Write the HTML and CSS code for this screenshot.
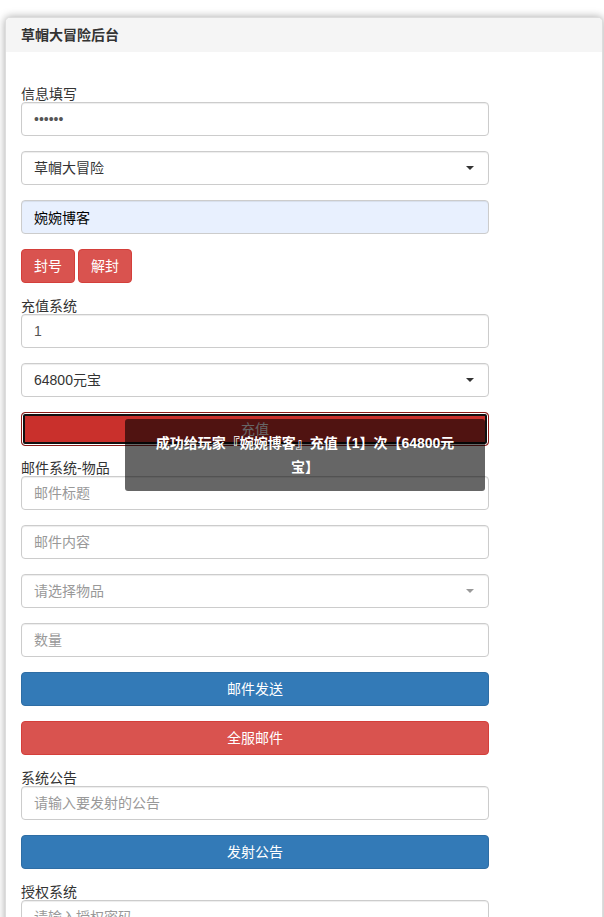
FILE: index.html
```html
<!DOCTYPE html>
<html lang="zh-CN">
<head>
    <meta charset="UTF-8">
    <meta name="viewport" content="width=device-width, initial-scale=1.0">
    <title>草帽大冒险后台</title>
    <link rel="stylesheet" href="styles.css">
</head>
<body>
    <div class="panel">
        <div class="panel-heading">草帽大冒险后台</div>
        <div class="panel-body">
            <form class="admin-form">
                <label class="field-label">信息填写</label>
                <div class="form-group">
                    <input type="password" class="form-control" value="123456">
                </div>
                <div class="form-group select-wrap">
                    <select class="form-control">
                        <option>草帽大冒险</option>
                    </select>
                </div>
                <div class="form-group">
                    <input type="text" class="form-control autofilled" value="婉婉博客">
                </div>
                <div class="form-group btn-row">
                    <button type="button" class="btn btn-danger">封号</button>
                    <button type="button" class="btn btn-danger">解封</button>
                </div>

                <label class="field-label">充值系统</label>
                <div class="form-group">
                    <input type="text" class="form-control" value="1">
                </div>
                <div class="form-group select-wrap">
                    <select class="form-control">
                        <option>64800元宝</option>
                    </select>
                </div>
                <div class="form-group tight">
                    <button type="button" class="btn btn-danger btn-block is-active">充值</button>
                </div>

                <label class="field-label">邮件系统-物品</label>
                <div class="form-group">
                    <input type="text" class="form-control" placeholder="邮件标题">
                </div>
                <div class="form-group">
                    <input type="text" class="form-control" placeholder="邮件内容">
                </div>
                <div class="form-group select-wrap is-empty">
                    <select class="form-control">
                        <option>请选择物品</option>
                    </select>
                </div>
                <div class="form-group">
                    <input type="text" class="form-control" placeholder="数量">
                </div>
                <div class="form-group">
                    <button type="button" class="btn btn-primary btn-block">邮件发送</button>
                </div>
                <div class="form-group">
                    <button type="button" class="btn btn-danger btn-block">全服邮件</button>
                </div>

                <label class="field-label">系统公告</label>
                <div class="form-group">
                    <input type="text" class="form-control" placeholder="请输入要发射的公告">
                </div>
                <div class="form-group">
                    <button type="button" class="btn btn-primary btn-block">发射公告</button>
                </div>

                <label class="field-label">授权系统</label>
                <div class="form-group">
                    <input type="text" class="form-control" placeholder="请输入授权密码">
                </div>
            </form>
        </div>
    </div>

    <div class="toast">成功给玩家『婉婉博客』充值【1】次【64800元<br>宝】</div>
</body>
</html>
```

FILE: styles.css
```css
body {
    font-family: "Liberation Sans", "Noto Sans CJK SC", sans-serif;
    font-size: 14px;
    color: #333;
    margin: 0;
    padding: 0;
    background-color: #fff;
}
.panel {
    margin: 17px 1px 0 5px;
    border: 1px solid #ddd;
    border-radius: 5px;
    background-color: #fff;
    box-shadow: 0 0 8px rgba(0, 0, 0, 0.35);
}
.panel-heading {
    background-color: #f5f5f5;
    padding: 9px 15px;
    line-height: 16px;
    font-weight: bold;
    color: #333;
    border-radius: 4px 4px 0 0;
}
.panel-body {
    padding: 34px 15px 0 15px;
}
.admin-form {
    width: 468px;
}
.field-label {
    display: block;
    line-height: 16px;
    color: #333;
}
.form-group {
    margin-bottom: 15px;
}
.form-group.tight {
    margin-bottom: 14px;
}
.form-control {
    display: block;
    box-sizing: border-box;
    width: 100%;
    height: 34px;
    padding: 6px 12px;
    font-family: inherit;
    font-size: 14px;
    color: #555;
    background-color: #fff;
    border: 1px solid #ccc;
    border-radius: 4px;
    box-shadow: inset 0 1px 1px rgba(0, 0, 0, 0.075);
    outline: none;
}
.form-control::placeholder {
    color: #999;
}
.autofilled {
    background-color: #e8f0fe;
    color: #000;
}
.select-wrap {
    position: relative;
}
.select-wrap select {
    appearance: none;
    -webkit-appearance: none;
    color: #333;
}
.select-wrap::after {
    content: "";
    position: absolute;
    right: 15px;
    top: 15px;
    border-left: 4px solid transparent;
    border-right: 4px solid transparent;
    border-top: 4px solid #333;
}
.select-wrap.is-empty select {
    color: #999;
}
.select-wrap.is-empty::after {
    border-top-color: #999;
}
.btn-row {
    display: flex;
    gap: 3px;
}
.btn {
    display: inline-block;
    box-sizing: border-box;
    height: 34px;
    padding: 6px 12px;
    font-family: inherit;
    font-size: 14px;
    line-height: 20px;
    color: #fff;
    border: 1px solid transparent;
    border-radius: 4px;
    cursor: pointer;
}
.btn-block {
    display: block;
    width: 100%;
}
.btn-danger {
    background-color: #d9534f;
    border-color: #d43f3a;
}
.btn-danger.is-active {
    background-color: #c9302c;
    border-color: #8c1c19;
    box-shadow: inset 0 0 0 1px #fff, inset 0 0 0 3px #101010;
}
.btn-primary {
    background-color: #337ab7;
    border-color: #2e6da4;
}
.toast {
    position: absolute;
    left: 125px;
    top: 419px;
    width: 360px;
    box-sizing: border-box;
    padding: 12px 10px;
    background-color: rgba(0, 0, 0, 0.6);
    color: #fff;
    font-weight: bold;
    line-height: 24px;
    text-align: center;
    border-radius: 3px;
}
```
